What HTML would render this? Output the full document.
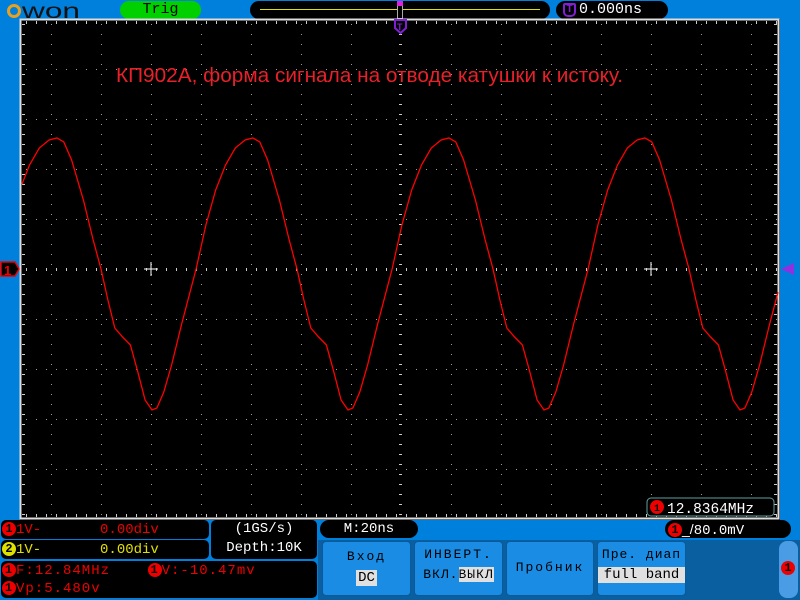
<!DOCTYPE html>
<html><head><meta charset="utf-8"><style>
body{margin:0;width:800px;height:600px;overflow:hidden;background:#0080dd;position:relative;font-family:"Liberation Mono",monospace}
.a{position:absolute;box-sizing:border-box}
.blk{background:#000;border-radius:8px}
.mono{font-family:"Liberation Mono",monospace;white-space:pre}
.btn{background:#1a8ce4;border-radius:4px;border:1px solid #0b5a9a;color:#000;font-size:13px;text-align:center;font-family:"Liberation Mono",monospace}
.dot{display:inline-block;width:14px;height:14px;border-radius:7px;background:#e00;color:#000;font-size:12px;line-height:14px;text-align:center;font-weight:bold;vertical-align:middle}
</style></head><body>
<!-- logo -->
<svg class="a" style="left:6px;top:1px" width="80" height="18"><circle cx="8" cy="10" r="5.5" fill="none" stroke="#e8a020" stroke-width="3"/><text x="16" y="17" font-family="Liberation Sans" font-size="21" fill="#111" textLength="58" lengthAdjust="spacingAndGlyphs">won</text></svg>
<div class="a" style="left:120px;top:1px;width:81px;height:18px;background:#00d000;border-radius:9px;color:#000;font-size:15px;text-align:center;line-height:18px" >Trig</div>
<div class="a blk" style="left:250px;top:1px;width:300px;height:18px;border-radius:9px"></div>
<div class="a" style="left:260px;top:9px;width:280px;height:1px;background:#e0e000"></div>
<div class="a" style="left:397px;top:1px;width:6px;height:18px;border:1px solid #aaa;background:#000"></div>
<div class="a" style="left:397px;top:1px;width:6px;height:5px;background:#e020e0"></div>
<div class="a blk" style="left:556px;top:1px;width:112px;height:18px;border-radius:9px"></div>
<div class="a" style="left:563px;top:3px;width:13px;height:14px;border:2px solid #8020d0;border-radius:2px 2px 5px 5px;color:#8020d0;font-size:11px;line-height:10px;text-align:center;font-weight:bold">T</div>
<div class="a mono" style="left:579px;top:1px;color:#fff;font-size:15px;line-height:18px">0.000ns</div>
<!-- plot -->
<svg class="a" style="left:0;top:0" width="800" height="520">
<rect x="20" y="19" width="760" height="501" fill="#000"/>
<g id="grid"></g>
<rect x="20.5" y="19.5" width="758" height="499" fill="none" stroke="#ddd" stroke-width="2"/>
<text x="116" y="82" font-family="Liberation Sans" font-size="20" fill="#e8202a" textLength="507" lengthAdjust="spacingAndGlyphs">КП902А, форма сигнала на отводе катушки к истоку.</text>
<path id="wave" fill="none" stroke="#f00" stroke-width="1.3"/>
<path d="M395 20h11v8l-5.5 5-5.5-5z" fill="#000" stroke="#8020d0" stroke-width="2"/>
<text x="397" y="30" font-size="9" fill="#8020d0" font-weight="bold" font-family="Liberation Sans">T</text>
<path d="M1 262h14l4 7-4 7h-14z" fill="#000" stroke="#e00" stroke-width="1.5"/>
<text x="4" y="275" font-size="13" fill="#e00" font-weight="bold" font-family="Liberation Sans">1</text>
<path d="M781 269l13-6v12z" fill="#9030e0"/>
<rect x="647" y="498" width="127" height="18" rx="4" fill="#000" stroke="#60a0a0"/>
<circle cx="657" cy="507" r="7" fill="#e00"/><text x="654" y="511" font-size="10" font-weight="bold">1</text>
<text x="667" y="513" font-family="Liberation Mono" font-size="14.5" fill="#fff">12.8364MHz</text>
</svg>
<!-- bottom -->
<div class="a blk" style="left:1px;top:520px;width:208px;height:19px;border-radius:5px"></div>
<div class="a blk" style="left:1px;top:540px;width:208px;height:19px;border-radius:5px"></div>
<div class="a blk" style="left:211px;top:520px;width:106px;height:39px;border-radius:5px"></div>
<div class="a blk" style="left:1px;top:561px;width:316px;height:37px;border-radius:5px"></div>
<div class="a mono" style="left:2px;top:521px;color:#e00;font-size:14px;line-height:18px"><span class="dot">1</span>1V-       0.00div</div>
<div class="a mono" style="left:2px;top:541px;color:#e0e000;font-size:14px;line-height:18px"><span class="dot" style="background:#e0e000">2</span>1V-       0.00div</div>
<div class="a mono" style="left:211px;top:520px;width:106px;color:#fff;font-size:14px;line-height:19px;text-align:center">(1GS/s)<br>Depth:10K</div>
<div class="a mono" style="left:2px;top:562px;color:#e00;font-size:14px;line-height:18px;letter-spacing:1px"><span class="dot">1</span>F:12.84MHz    <span class="dot">1</span>V:-10.47mv<br><span class="dot">1</span>Vp:5.480v</div>
<div class="a blk" style="left:320px;top:520px;width:98px;height:18px;border-radius:9px;color:#fff;font-size:14px;line-height:18px;text-align:center">M:20ns</div>
<div class="a blk" style="left:665px;top:520px;width:126px;height:18px;border-radius:9px"></div>
<div class="a mono" style="left:668px;top:520px;color:#fff;font-size:14px;line-height:18px"><span class="dot">1</span><span style="font-family:Liberation Sans">_/</span>80.0mV</div>
<div class="a" style="left:318px;top:540px;width:482px;height:60px;background:#0a5fa0"></div>
<div class="a btn" style="left:322px;top:541px;width:89px;height:55px"><div style="margin-top:7px;letter-spacing:2px">Вход</div><div style="display:inline-block;background:#e0e0e0;margin-top:6px;padding:0 2px;font-size:14px">DC</div></div>
<div class="a btn" style="left:414px;top:541px;width:89px;height:55px"><div style="margin-top:5px;letter-spacing:2px">ИНВЕРТ.</div><div style="margin-top:5px;letter-spacing:1px">ВКЛ.<span style="background:#e0e0e0">ВЫКЛ</span></div></div>
<div class="a btn" style="left:506px;top:541px;width:88px;height:55px;line-height:52px;letter-spacing:2px">Пробник</div>
<div class="a btn" style="left:597px;top:541px;width:89px;height:55px"><div style="margin-top:5px;letter-spacing:1px">Пре. диап</div><div style="margin-top:5px;background:#e0e0e0;font-size:14px">full band</div></div>
<div class="a" style="left:779px;top:541px;width:19px;height:57px;background:#4a9ce4;border-radius:8px"></div>
<div class="a dot" style="left:781px;top:561px">1</div>
<script>
var g='',sv=document.getElementById('grid');
for(var x=51;x<778;x+=50)for(var y=24;y<518;y+=10)g+='<rect x="'+x+'" y="'+y+'" width="1" height="1" fill="#999"/>';
for(var y=69;y<518;y+=50)for(var x=26;x<778;x+=10)g+='<rect x="'+x+'" y="'+y+'" width="1" height="1" fill="#999"/>';
for(var x=26;x<778;x+=10){g+='<rect x="'+x+'" y="21" width="1" height="3" fill="#ccc"/><rect x="'+x+'" y="514" width="1" height="3" fill="#ccc"/><rect x="'+x+'" y="268" width="1" height="3" fill="#ccc"/>';}
for(var y=24;y<518;y+=10){g+='<rect x="22" y="'+y+'" width="3" height="1" fill="#ccc"/><rect x="774" y="'+y+'" width="3" height="1" fill="#ccc"/><rect x="399" y="'+y+'" width="3" height="1" fill="#ccc"/>';}
[151,651].forEach(function(c){g+='<path d="M'+(c-7)+' 269h14M'+c+' 262v14" stroke="#fff"/>';});
sv.innerHTML=g;
var k=[[0,410],[5,408],[12,392],[20,365],[30,325],[45,269],[55,225],[65,190],[75,165],[85,148],[95,140],[103,138],[110,142],[118,160],[130,200],[140,240],[148,269],[155,300],[162,328],[170,337],[178,345],[185,370],[193,400],[200,410]];
var P=196,s=P/200,pts=[];
for(var b=-240;b<1000;b+=P)for(var i=0;i<k.length-1;i++)pts.push([b+k[i][0]*s,k[i][1]]);
var d='';
for(var i=1;i<pts.length;i++){var p=pts[i-1],q=pts[i];
 if(q[0]<22||p[0]>778)continue;
 var x0=p[0],y0=p[1];if(x0<22){y0=p[1]+(q[1]-p[1])*(22-x0)/(q[0]-x0);x0=22;}
 var x1=q[0],y1=q[1];if(x1>778){y1=p[1]+(q[1]-p[1])*(778-p[0])/(x1-p[0]);x1=778;}
 if(!d)d='M'+x0.toFixed(1)+' '+y0.toFixed(1);
 d+='L'+x1.toFixed(1)+' '+y1.toFixed(1);}
document.getElementById('wave').setAttribute('d',d);
</script>
</body></html>
